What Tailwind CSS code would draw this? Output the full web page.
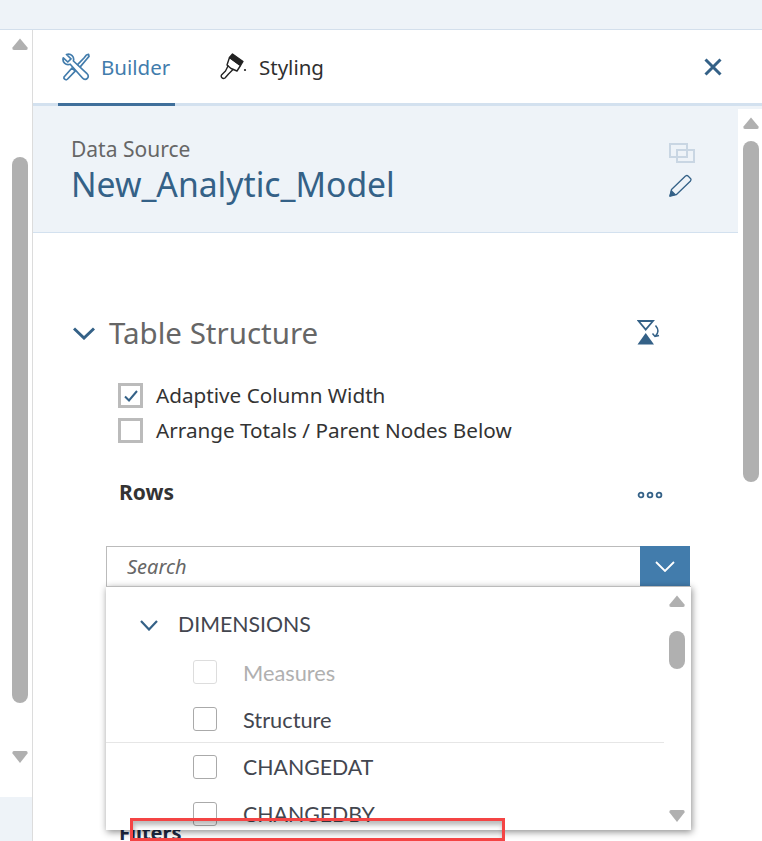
<!DOCTYPE html>
<html lang="en">
<head>
    <meta charset="UTF-8">
    <meta name="viewport" content="width=device-width, initial-scale=1.0">
    <title>Builder panel</title>
    <script src="https://cdn.jsdelivr.net/npm/@tailwindcss/browser@4"></script>
</head>
<body class="bg-white">
<div class="relative w-[762px] h-[841px] overflow-hidden flex flex-col bg-white font-['Noto_Sans','Open_Sans',sans-serif]">

    <!-- top shell bar -->
    <div class="h-[30px] shrink-0 bg-[#eef3f8] border-b border-[#d3dfec]"></div>

    <div class="flex flex-1 min-h-0">
        <!-- left scroller -->
        <div class="w-[33px] shrink-0 border-r border-[#dcdcdc] flex flex-col">
            <div class="pl-[12px] pt-[8px] flex flex-col h-[767px]">
                <svg width="16" height="12" viewBox="0 0 16 12"><path d="M8 0.5 L15.5 9.5 Q16 12 14 12 L2 12 Q0 12 0.5 9.5 Z" fill="#b0b0b0"/></svg>
                <div class="w-[16px] h-[546px] mt-[107px] rounded-full bg-[#b0b0b0]"></div>
                <svg class="mt-[48px]" width="16" height="12" viewBox="0 0 16 12"><path d="M8 12 L0.5 2.5 Q0 0 2 0 L14 0 Q16 0 15.5 2.5 Z" fill="#b0b0b0"/></svg>
            </div>
            <div class="flex-1 bg-[#eef3f8]"></div>
        </div>

        <!-- panel -->
        <div class="flex-1 min-w-0 flex flex-col">
            <!-- tabs -->
            <div class="h-[76px] shrink-0 border-b-[3px] border-[#d3e1ef] flex items-stretch pl-[25px] pr-[40px]">
                <div class="w-[117px] -mb-[3px] border-b-[3px] border-[#3f6f9b] flex items-center gap-[11px] pl-[4px]">
                    <svg width="28" height="28" viewBox="0 0 28 28" fill="none" stroke="#427cac" stroke-width="1.7" stroke-linejoin="round" stroke-linecap="round">
                        <path d="M4.5 1.5 L9 5.8 L5.8 9 L1.3 4.8 C0 9 3.6 12.6 8.2 11.2 L20.5 25 C22 26.8 24.2 26.6 25.3 25.4 C26.6 24 26.6 22 25 20.6 L11.4 8 C12.6 3.6 9 0.2 4.5 1.5 Z"/>
                        <path d="M2 24 L2 25.6 C3.2 27.2 4.6 27 5.6 26 L13.2 18.2 L10 15 Z"/>
                        <path d="M15.8 11.4 L22 5 L24.4 2 L26.6 1.4 L27 3.4 L24.8 6 L18.4 13.6"/>
                    </svg>
                    <span class="text-[20.5px] leading-none pt-[2px] text-[#427cac]">Builder</span>
                </div>
                <div class="flex items-center gap-[12px] ml-[45px]">
                    <svg width="27" height="27" viewBox="0 0 27 27" fill="none" stroke="#222" stroke-width="1.4" stroke-linejoin="round" stroke-linecap="round">
                        <path d="M9.5 4.5 L20.5 12.5 L17 18 L11 15.5 L7 12 Z"/>
                        <path d="M12.5 1 L23 8.5 L20.5 12.5 L9.5 4.5 Z" fill="#222"/>
                        <path d="M8 13 L5.5 18 L1.5 22 C0.5 24 2.5 26.5 5 25 L8.5 21 L13 16.5"/>
                        <circle cx="25" cy="17" r="1.1" fill="#222" stroke="none"/>
                    </svg>
                    <span class="text-[20.5px] leading-none pt-[2px] text-[#2f2f2f]">Styling</span>
                </div>
                <svg class="ml-auto self-center" width="18" height="18" viewBox="0 0 18 18" fill="none" stroke="#346187" stroke-width="3"><path d="M1.5 1.5 L16.5 16.5 M16.5 1.5 L1.5 16.5"/></svg>
            </div>

            <div class="flex flex-1 min-h-0">
                <!-- content -->
                <div class="w-[705px] shrink-0 flex flex-col">
                    <div class="relative h-[127px] shrink-0 bg-[#eef3f8] border-b border-[#d3e1ef] pl-[38px] pt-[31px]">
                        <div class="text-[21px] leading-[24px] text-[#666666]">Data Source</div>
                        <div class="text-[33.7px] leading-[44px] mt-[1px] text-[#346187]">New_Analytic_Model</div>
                        <div class="absolute left-[636px] top-[37px] flex flex-col gap-[11px]">
                            <svg width="26" height="20" viewBox="0 0 26 20" fill="none" stroke="#c9d6e3" stroke-width="2"><rect x="1" y="1" width="17" height="13"/><rect x="8" y="7" width="17" height="12"/></svg>
                            <svg width="23" height="23" viewBox="0 0 23 23" fill="none" stroke="#346187" stroke-width="1.3" stroke-linejoin="round"><path d="M1 22 L2.5 15.5 L16.5 2 Q18 1 19 2 L21.5 4.5 Q22.5 5.5 21.5 7 L7.5 20.5 Z"/><path d="M1 22 L2.5 17 L6 20.5 Z" fill="#346187"/></svg>
                        </div>
                    </div>

                    <!-- table structure -->
                    <div class="flex items-center shrink-0 pl-[40px] pr-[76px] mt-[81px] h-[38px]">
                        <svg width="22" height="13" viewBox="0 0 22 13" fill="none" stroke="#346187" stroke-width="3"><path d="M1 1.5 L11 11 L21 1.5"/></svg>
                        <span class="ml-[14px] text-[29.5px] leading-none text-[#666666]">Table Structure</span>
                        <svg class="ml-auto -mt-[2px]" width="25" height="25" viewBox="0 0 25 25" fill="none">
                            <path d="M1.5 1 L16 1 L8.7 9.5 Z" stroke="#346187" stroke-width="1.8"/>
                            <path d="M8.7 13 L17 24.5 L0.5 24.5 Z" fill="#346187"/>
                            <path d="M18.5 5.5 C21.5 9 21.5 13 18.5 16 M15.5 13.5 L18 16.5 L22 15.5" stroke="#346187" stroke-width="1.5"/>
                        </svg>
                    </div>

                    <div class="pl-[85px] mt-[31px] shrink-0 flex flex-col gap-[10px]">
                        <label class="flex items-center gap-[13px] h-[25px]">
                            <span class="w-[25px] h-[25px] border-[3px] border-[#bbbbbb] flex items-center justify-center">
                                <svg width="14" height="12" viewBox="0 0 14 12" fill="none" stroke="#346187" stroke-width="2"><path d="M1 6.5 L5 10.5 L13 1"/></svg>
                            </span>
                            <span class="text-[20.7px] leading-none text-[#333333]">Adaptive Column Width</span>
                        </label>
                        <label class="flex items-center gap-[13px] h-[25px]">
                            <span class="w-[25px] h-[25px] border-[3px] border-[#bbbbbb]"></span>
                            <span class="text-[20.7px] leading-none text-[#333333]">Arrange Totals / Parent Nodes Below</span>
                        </label>
                    </div>

                    <div class="flex items-center shrink-0 pl-[86px] pr-[75px] mt-[35px] h-[28px]">
                        <span class="text-[21px] leading-none font-bold text-[#333333]">Rows</span>
                        <svg class="ml-auto mt-[6px]" width="26" height="8" viewBox="0 0 26 8" fill="none" stroke="#346187" stroke-width="1.8"><circle cx="4" cy="4" r="2.4"/><circle cx="13" cy="4" r="2.4"/><circle cx="22" cy="4" r="2.4"/></svg>
                    </div>

                    <!-- search -->
                    <div class="ml-[73px] w-[584px] h-[41px] mt-[40px] flex shrink-0">
                        <div class="flex-1 border border-[#bbbbbb] border-r-0 pl-[20px] flex items-center text-[20px] italic text-[#666666]">Search</div>
                        <div class="w-[50px] bg-[#427cac] flex items-center justify-center">
                            <svg width="20" height="11" viewBox="0 0 20 11" fill="none" stroke="#ffffff" stroke-width="1.8"><path d="M1 1 L10 10 L19 1"/></svg>
                        </div>
                    </div>

                    <div class="pl-[86px] mt-[234px] shrink-0 text-[20px] leading-[24px] font-bold text-[#1f2a44]">Filters</div>
                </div>

                <!-- panel scroller -->
                <div class="w-[24px] shrink-0 border-t-[3px] border-[#eef3f8] pl-[5px] pt-[8px] flex flex-col">
                    <svg width="16" height="12" viewBox="0 0 16 12"><path d="M8 0.5 L15.5 9.5 Q16 12 14 12 L2 12 Q0 12 0.5 9.5 Z" fill="#b0b0b0"/></svg>
                    <div class="w-[16px] h-[341px] mt-[12px] rounded-full bg-[#b0b0b0]"></div>
                </div>
            </div>
        </div>
    </div>

    <!-- dropdown popover -->
    <div class="absolute left-[106px] top-[586px] w-[585px] h-[244px] bg-white border-t border-[#bbbbbb] shadow-[1px_2px_7px_rgba(0,0,0,0.45)] overflow-hidden flex">
        <div class="w-[558px] shrink-0 flex flex-col">
            <div class="flex items-center shrink-0 pl-[34px] h-[61px] pt-[15px]">
                <svg width="18" height="11" viewBox="0 0 18 11" fill="none" stroke="#346187" stroke-width="2.2"><path d="M1 1 L9 9.5 L17 1"/></svg>
                <span class="ml-[20px] text-[21.3px] leading-none font-['Lato'] text-[#43464f]">DIMENSIONS</span>
            </div>
            <div class="flex items-center shrink-0 pl-[87px] h-[47px]">
                <span class="w-[24px] h-[24px] rounded-[3px] border border-[#dddddd]"></span>
                <span class="ml-[26px] pt-[2px] text-[21.8px] leading-none font-['Lato'] text-[#b0b0b0]">Measures</span>
            </div>
            <div class="flex items-center shrink-0 pl-[87px] h-[48px] border-b border-[#e6e6e6]">
                <span class="w-[24px] h-[24px] rounded-[3px] border border-[#aaaaaa]"></span>
                <span class="ml-[26px] pt-[2px] text-[21.8px] leading-none font-['Lato'] text-[#43464f]">Structure</span>
            </div>
            <div class="flex items-center shrink-0 pl-[87px] h-[47px]">
                <span class="w-[24px] h-[24px] rounded-[3px] border border-[#aaaaaa]"></span>
                <span class="ml-[26px] pt-[2px] text-[21.3px] leading-none font-['Lato'] text-[#43464f]">CHANGEDAT</span>
            </div>
            <div class="flex items-center shrink-0 pl-[87px] h-[48px]">
                <span class="w-[24px] h-[24px] rounded-[3px] border border-[#aaaaaa]"></span>
                <span class="ml-[26px] pt-[2px] text-[21.3px] leading-none font-['Lato'] text-[#43464f]">CHANGEDBY</span>
            </div>
        </div>
        <div class="flex-1 pl-[5px] pt-[8px] flex flex-col">
            <svg class="shrink-0" width="16" height="12" viewBox="0 0 16 12"><path d="M8 0.5 L15.5 9.5 Q16 12 14 12 L2 12 Q0 12 0.5 9.5 Z" fill="#b0b0b0"/></svg>
            <div class="w-[16px] h-[38px] shrink-0 mt-[24px] rounded-full bg-[#b0b0b0]"></div>
            <svg class="mt-[141px] shrink-0" width="16" height="12" viewBox="0 0 16 12"><path d="M8 12 L0.5 2.5 Q0 0 2 0 L14 0 Q16 0 15.5 2.5 Z" fill="#b0b0b0"/></svg>
        </div>
    </div>

    <!-- red annotation box -->
    <div class="absolute left-[130px] top-[818px] w-[375px] h-[23px] border-[3px] border-[#f44444] shadow-[inset_1px_4px_5px_rgba(0,0,0,0.28)]"></div>
</div>
</body>
</html>
